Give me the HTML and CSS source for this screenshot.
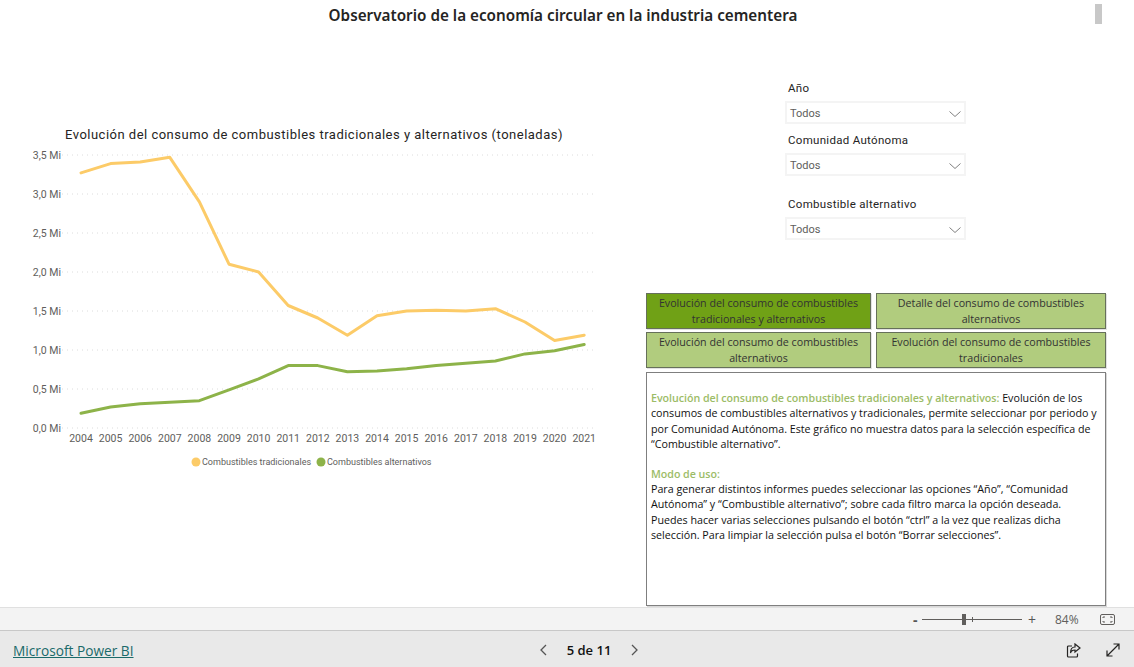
FILE: index.html
```html
<!DOCTYPE html>
<html lang="es">
<head>
<meta charset="UTF-8">
<title>Observatorio de la economía circular en la industria cementera</title>
<link rel="stylesheet" href="styles.css">
</head>
<body>
<div class="report">
  <h1 class="report-title">Observatorio de la economía circular en la industria cementera</h1>
  <div class="scroll-thumb"></div>

  <div class="canvas">
    <section class="chart">
      <h2 class="chart-title">Evolución del consumo de combustibles tradicionales y alternativos (toneladas)</h2>
      <svg class="chart-svg" width="610" height="350" viewBox="0 138 610 350">
        <g class="grid">
          <line x1="62" x2="594" y1="155" y2="155"/>
          <line x1="62" x2="594" y1="194" y2="194"/>
          <line x1="62" x2="594" y1="233" y2="233"/>
          <line x1="62" x2="594" y1="272" y2="272"/>
          <line x1="62" x2="594" y1="311" y2="311"/>
          <line x1="62" x2="594" y1="350" y2="350"/>
          <line x1="62" x2="594" y1="389" y2="389"/>
          <line x1="62" x2="594" y1="428" y2="428"/>
        </g>
        <g class="y-axis">
          <text x="61" y="159">3,5 Mi</text>
          <text x="61" y="198">3,0 Mi</text>
          <text x="61" y="237">2,5 Mi</text>
          <text x="61" y="276">2,0 Mi</text>
          <text x="61" y="315">1,5 Mi</text>
          <text x="61" y="354">1,0 Mi</text>
          <text x="61" y="393">0,5 Mi</text>
          <text x="61" y="432">0,0 Mi</text>
        </g>
        <g class="x-axis">
          <text x="81" y="442">2004</text>
          <text x="110.6" y="442">2005</text>
          <text x="140.2" y="442">2006</text>
          <text x="169.8" y="442">2007</text>
          <text x="199.4" y="442">2008</text>
          <text x="229" y="442">2009</text>
          <text x="258.6" y="442">2010</text>
          <text x="288.2" y="442">2011</text>
          <text x="317.8" y="442">2012</text>
          <text x="347.4" y="442">2013</text>
          <text x="377" y="442">2014</text>
          <text x="406.6" y="442">2015</text>
          <text x="436.2" y="442">2016</text>
          <text x="465.8" y="442">2017</text>
          <text x="495.4" y="442">2018</text>
          <text x="525" y="442">2019</text>
          <text x="554.6" y="442">2020</text>
          <text x="584.2" y="442">2021</text>
        </g>
        <polyline class="line-trad" points="81,172.9 110.6,163.6 140.2,162 169.8,157.3 199.4,201.8 229,264.2 258.6,272 288.2,305.5 317.8,318 347.4,335.2 377,315.7 406.6,311 436.2,310.2 465.8,311 495.4,308.7 525,322 554.6,340.6 584.2,335.2"/>
        <polyline class="line-alt" points="81,413.2 110.6,407 140.2,403.8 169.8,402.3 199.4,400.7 229,389.8 258.6,378.9 288.2,365.6 317.8,365.6 347.4,371.8 377,371 406.6,368.7 436.2,365.6 465.8,363.3 495.4,361 525,353.9 554.6,350.8 584.2,344.5"/>
        <g class="legend">
          <circle class="dot-trad" cx="196" cy="462" r="4.5"/>
          <text x="202" y="465">Combustibles tradicionales</text>
          <circle class="dot-alt" cx="321" cy="462" r="4.5"/>
          <text x="327" y="465">Combustibles alternativos</text>
        </g>
      </svg>
    </section>

    <section class="side">
      <div class="slicers">
        <div class="slicer">
          <div class="slicer-label">Año</div>
          <div class="slicer-box">Todos
            <svg width="12" height="6" viewBox="0 0 12 6"><path d="M.5.500L6 5.500 11.500.500"/></svg>
          </div>
        </div>
        <div class="slicer">
          <div class="slicer-label">Comunidad Autónoma</div>
          <div class="slicer-box">Todos
            <svg width="12" height="6" viewBox="0 0 12 6"><path d="M.5.500L6 5.500 11.500.500"/></svg>
          </div>
        </div>
        <div class="slicer slicer-last">
          <div class="slicer-label">Combustible alternativo</div>
          <div class="slicer-box">Todos
            <svg width="12" height="6" viewBox="0 0 12 6"><path d="M.5.500L6 5.500 11.500.500"/></svg>
          </div>
        </div>
      </div>

      <div class="tabs">
        <button class="tab tab-active">Evolución del consumo de combustibles tradicionales y alternativos</button>
        <button class="tab">Detalle del consumo de combustibles alternativos</button>
        <button class="tab">Evolución del consumo de combustibles alternativos</button>
        <button class="tab">Evolución del consumo de combustibles tradicionales</button>
      </div>

      <div class="notes">
        <p><b>Evolución del consumo de combustibles tradicionales y alternativos:</b> Evolución de los consumos de combustibles alternativos y tradicionales, permite seleccionar por periodo y por Comunidad Autónoma. Este gráfico no muestra datos para la selección específica de “Combustible alternativo”.</p>
        <p><b>Modo de uso:</b><br>Para generar distintos informes puedes seleccionar las opciones “Año”, “Comunidad Autónoma” y “Combustible alternativo”; sobre cada filtro marca la opción deseada. Puedes hacer varias selecciones pulsando el botón “ctrl” a la vez que realizas dicha selección. Para limpiar la selección pulsa el botón “Borrar selecciones”.</p>
      </div>
    </section>
  </div>
</div>

<div class="zoombar">
  <span class="zoom-minus">-</span>
  <div class="zoom-track"><i class="zoom-tick"></i><i class="zoom-thumb"></i></div>
  <span class="zoom-plus">+</span>
  <span class="zoom-pct">84%</span>
  <svg class="zoom-fit" width="15" height="11" viewBox="0 0 15 11">
    <rect x=".5" y=".5" width="14" height="10" rx="1.5"/>
    <path d="M3 4V3h2M10 3h2v1M12 7v1h-2M5 8H3V7"/>
  </svg>
</div>

<footer class="footer">
  <a class="brand" href="#">Microsoft Power BI</a>
  <div class="pager">
    <svg width="9" height="12" viewBox="0 0 9 12"><path d="M7 1L2 6l5 5"/></svg>
    <span class="pager-text">5 de 11</span>
    <svg width="9" height="12" viewBox="0 0 9 12"><path d="M2 1l5 5-5 5"/></svg>
  </div>
  <div class="footer-icons">
    <svg width="15" height="15" viewBox="0 0 15 15"><path d="M6 3H2.500a1 1 0 0 0-1 1v9a1 1 0 0 0 1 1h8a1 1 0 0 0 1-1v-2.500M9 1l5 4-5 4V7c-2.500 0-4 1-4.500 3 0-3.500 1.500-6 4.500-6z"/></svg>
    <svg width="14" height="14" viewBox="0 0 14 14"><path d="M1 13L13 1M7.500 1H13v5.500M1 7.500V13h5.500"/></svg>
  </div>
</footer>
</body>
</html>
```

FILE: styles.css
```css
*{box-sizing:border-box}
html,body{height:100%}
body{margin:0;background:#fff;color:#000;font-family:"Open Sans","Noto Sans",Arial,sans-serif;overflow:hidden}

/* -------- report -------- */
.report{position:relative;height:607px;overflow:hidden}
.report-title{margin:0;height:30px;line-height:31px;text-align:center;font-family:"Noto Sans",Arial,sans-serif;font-size:15.250px;font-weight:600;color:#252423;padding-right:8px}
.scroll-thumb{position:absolute;left:1095px;top:4px;width:7px;height:20px;background:#c8c8c8}
.canvas{display:flex}

/* -------- chart -------- */
.chart{width:646px;padding-top:95px}
.chart-title{margin:0 0 0 65px;height:13px;line-height:20px;font-size:13px;font-weight:400;letter-spacing:.49px;color:#252423;font-family:Roboto,Arial,sans-serif;white-space:nowrap}
.chart-svg{display:block}
.chart-svg text{font-family:Roboto,Arial,sans-serif}
.grid line{stroke:#dcdcdc;stroke-width:1;stroke-dasharray:1 4}
.y-axis text{font-size:10.5px;fill:#605e5c;text-anchor:end}
.x-axis text{font-size:10.5px;fill:#605e5c;text-anchor:middle}
.line-trad,.line-alt{fill:none;stroke-width:3;stroke-linejoin:round;stroke-linecap:round}
.line-trad{stroke:#fccb68}
.line-alt{stroke:#8db349}
.dot-trad{fill:#fccb68}
.dot-alt{fill:#8db349}
.legend text{font-size:9px;fill:#605e5c}

/* -------- side -------- */
.side{width:460px}
.slicers{margin-left:139px;padding-top:50px;width:181px;height:263px}
.slicer{margin-bottom:8px}
.slicer-last{margin-top:20px}
.slicer-label{height:21px;line-height:16px;padding-left:3px;font-size:11.500px;color:#252423;font-family:Roboto,Arial,sans-serif;letter-spacing:.3px}
.slicer-box{display:flex;align-items:center;justify-content:space-between;height:23px;padding:2px 3px 0 3px;border:2px solid #f4f4f4;font-size:11px;color:#605e5c;font-family:Roboto,Arial,sans-serif}
.slicer-box svg{fill:none;stroke:#808080;stroke-width:1}

.tabs{display:grid;grid-template-columns:225px 230px;column-gap:5px;row-gap:3px}
.tab{height:36px;padding:0 8px;border:1px solid #66705a;box-shadow:1px 1px 0 #e2e2e2;background:#b1cc7e;color:#333;font:10.700px/16px "Open Sans",Arial,sans-serif;text-align:center}
.tab-active{background:#70a116}

.notes{width:460px;height:234px;margin-top:4px;padding:18px 6px 0 4px;border:1px solid #7f7f7f;box-shadow:1px 1px 0 #d8d8d8;font-size:10.700px;line-height:15.400px;color:#111}
.notes p{margin:0 0 14px}
.notes b{color:#9cbc67;font-weight:600;letter-spacing:-.04px}

/* -------- bottom bars -------- */
.zoombar{display:flex;align-items:center;height:24px;background:#f3f3f3;border-top:1px solid #e0e0e0;border-bottom:1px solid #c8c8c8;font-family:"Open Sans",Arial,sans-serif}
.zoom-minus{margin-left:913px;width:8px;font-size:14px;font-weight:700;color:#555}
.zoom-track{position:relative;width:100px;height:1px;margin-left:1px;background:#605e5c}
.zoom-tick{position:absolute;left:50px;top:-2px;width:1px;height:5px;background:#605e5c}
.zoom-thumb{position:absolute;left:40px;top:-5px;width:4px;height:11px;background:#605e5c}
.zoom-plus{margin-left:6px;width:12px;font-size:14px;color:#555}
.zoom-pct{margin-left:15px;width:27px;font-size:12px;color:#605e5c}
.zoom-fit{margin-left:18px;fill:none;stroke:#605e5c;stroke-width:1}

.footer{display:flex;align-items:center;justify-content:space-between;height:36px;background:#e9e9e9;padding:2px 13px 0}
.brand{width:300px;font-size:13.700px;font-weight:400;color:#1a6a6a;text-decoration:underline}
.pager{display:flex;align-items:center;gap:19px;margin-left:44px}
.pager svg{fill:none;stroke:#555;stroke-width:1.300}
.pager-text{font-size:13px;font-weight:600;color:#111}
.footer-icons{display:flex;justify-content:flex-end;gap:25px;width:300px;padding-right:1px}
.footer-icons svg{fill:none;stroke:#252423;stroke-width:1.200}
```
